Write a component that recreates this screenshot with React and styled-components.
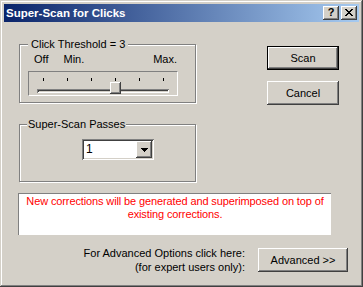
import styled, { createGlobalStyle } from 'styled-components';

const GlobalStyle = createGlobalStyle`
  html, body {
    margin: 0;
    padding: 0;
    background: #d4d0c8;
  }
  body {
    font-family: "Liberation Sans", Arial, sans-serif;
    font-size: 11px;
    color: #000;
  }
`;

const FACE = '#d4d0c8';
const raised = 'inset -1px -1px #404040, inset 1px 1px #fff, inset -2px -2px #808080';

const TICKS = [0, 1, 2, 3, 4, 5];

const App = () => {
    const threshold = 3;

    return (
        <>
            <GlobalStyle />
            <Window>
                <TitleBar>
                    <TitleText>Super-Scan for Clicks</TitleText>
                    <CaptionButtons>
                        <CaptionButton>?</CaptionButton>
                        <CaptionButton>
                            <svg width="8" height="7" viewBox="0 0 8 7" shapeRendering="crispEdges">
                                <path d="M0 0h2v1H0zM1 1h2v1H1zM2 2h2v1H2zM3 3h2v1H3zM2 4h2v1H2zM1 5h2v1H1zM0 6h2v1H0zM6 0h2v1H6zM5 1h2v1H5zM4 2h2v1H4zM4 4h2v1H4zM5 5h2v1H5zM6 6h2v1H6z" fill="#000" />
                            </svg>
                        </CaptionButton>
                    </CaptionButtons>
                </TitleBar>

                <Body>
                    <MainRow>
                        <LeftCol>
                            <Group>
                                <GroupFrame $height={59}>
                                    <Legend $left={8} $pad={3}>Click Threshold = 3</Legend>
                                    <ScaleLabels>
                                        <span>Off</span>
                                        <span>Min.</span>
                                        <MaxLabel>Max.</MaxLabel>
                                    </ScaleLabels>
                                    <SliderFrame>
                                        <Ticks>
                                            {TICKS.map(t => <Tick key={t} />)}
                                        </Ticks>
                                        <Channel />
                                        <Thumb style={{left: 14 + threshold * 24 - 5}} />
                                    </SliderFrame>
                                </GroupFrame>
                            </Group>

                            <Group $gap={15}>
                                <GroupFrame $height={58}>
                                    <Legend $left={7} $pad={1}>Super-Scan Passes</Legend>
                                    <Combo>
                                        <ComboText>1</ComboText>
                                        <DropButton>
                                            <svg width="7" height="4" viewBox="0 0 7 4" shapeRendering="crispEdges">
                                                <path d="M0 0h7v1H0zM1 1h5v1H1zM2 2h3v1H2zM3 3h1v1H3z" fill="#000" />
                                            </svg>
                                        </DropButton>
                                    </Combo>
                                </GroupFrame>
                            </Group>
                        </LeftCol>

                        <RightCol>
                            <PushButton $default $w={72}>Scan</PushButton>
                            <PushButton $w={72}>Cancel</PushButton>
                        </RightCol>
                    </MainRow>

                    <InfoBox>
                        New corrections will be generated and superimposed on top of existing corrections.
                    </InfoBox>

                    <Footer>
                        <FooterText>
                            For Advanced Options click here:<br />
                            (for expert users only):
                        </FooterText>
                        <PushButton $w={90}>Advanced &gt;&gt;</PushButton>
                    </Footer>
                </Body>
            </Window>
        </>
    )
}

const Window = styled.div`
    width: 363px;
    height: 287px;
    box-sizing: border-box;
    padding: 4px;
    background: ${FACE};
    box-shadow: inset -1px -1px #404040, inset 1px 1px ${FACE}, inset -2px -2px #808080, inset 2px 2px #fff;
    display: flex;
    flex-direction: column;
`

const TitleBar = styled.div`
    height: 18px;
    display: flex;
    align-items: center;
    padding: 0 2px;
    background: linear-gradient(to right, #0a246a, #a6caf0);
`

const TitleText = styled.div`
    flex: 1;
    color: #fff;
    font-weight: bold;
    font-size: 11.5px;
    white-space: nowrap;
`

const CaptionButtons = styled.div`
    display: flex;
    gap: 2px;
`

const CaptionButton = styled.div`
    width: 16px;
    height: 14px;
    box-sizing: border-box;
    background: ${FACE};
    box-shadow: ${raised};
    display: flex;
    align-items: center;
    justify-content: center;
    padding-bottom: 1px;
    font-weight: bold;
    font-size: 11px;
    line-height: 1;
`

const Body = styled.div`
    flex: 1;
    display: flex;
    flex-direction: column;
    padding: 16px 0 0 14px;
`

const MainRow = styled.div`
    display: flex;
    align-items: flex-start;
`

const LeftCol = styled.div`
    display: flex;
    flex-direction: column;
    margin-left: 1px;
`

const Group = styled.div`
    padding-top: 6px;
    margin-top: ${p => p.$gap || 0}px;
`

const GroupFrame = styled.div`
    position: relative;
    width: 177px;
    height: ${p => p.$height}px;
    box-sizing: border-box;
    border: 1px solid #808080;
    box-shadow: inset 1px 1px #fff, 1px 1px #fff;
    display: flex;
    flex-direction: column;
    align-items: flex-start;
`

const Legend = styled.span`
    position: absolute;
    top: -7px;
    left: ${p => p.$left}px;
    padding: 0 ${p => p.$pad}px;
    line-height: 13px;
    background: ${FACE};
    white-space: nowrap;
`

const ScaleLabels = styled.div`
    align-self: stretch;
    display: flex;
    gap: 15px;
    padding: 8px 18px 0 14px;
    line-height: 13px;
`

const MaxLabel = styled.span`
    margin-left: auto;
`

const SliderFrame = styled.div`
    position: relative;
    width: 150px;
    height: 25px;
    box-sizing: border-box;
    margin: 5px 0 0 8px;
    border-top: 1px solid #808080;
    border-left: 1px solid #808080;
    border-bottom: 1px solid #fff;
    border-right: 1px solid #fff;
`

const Ticks = styled.div`
    display: flex;
    gap: 23px;
    padding: 6px 0 0 14px;
`

const Tick = styled.div`
    width: 1px;
    height: 3px;
    background: #000;
`

const Channel = styled.div`
    width: 132px;
    height: 4px;
    margin: 8px 0 0 8px;
    background: ${FACE};
    box-shadow: inset 1px 1px #808080, inset -1px -1px #fff, inset 2px 2px #404040;
`

const Thumb = styled.div`
    position: absolute;
    top: 10px;
    width: 11px;
    height: 12px;
    background: ${FACE};
    box-shadow: ${raised};
`

const Combo = styled.div`
    width: 72px;
    height: 21px;
    box-sizing: border-box;
    margin: 14px 0 0 62px;
    padding: 2px;
    display: flex;
    background: #fff;
    box-shadow: inset 1px 1px #808080, inset -1px -1px #fff, inset 2px 2px #404040, inset -2px -2px ${FACE};
`

const ComboText = styled.div`
    flex: 1;
    padding-left: 2px;
    font-size: 12px;
    line-height: 17px;
`

const DropButton = styled.div`
    width: 16px;
    height: 17px;
    box-sizing: border-box;
    background: ${FACE};
    box-shadow: ${raised};
    display: flex;
    align-items: center;
    justify-content: center;
`

const RightCol = styled.div`
    display: flex;
    flex-direction: column;
    gap: 11px;
    padding-top: 8px;
    margin-left: 71px;
`

const PushButton = styled.button`
    width: ${p => p.$w}px;
    height: 24px;
    padding: 0;
    border: none;
    background: ${FACE};
    font-family: "Liberation Sans", Arial, sans-serif;
    font-size: 11px;
    color: #000;
    box-shadow: ${p => p.$default
        ? 'inset 0 0 0 1px #000, inset -2px -2px #404040, inset 2px 2px #fff, inset -3px -3px #808080'
        : raised};
`

const InfoBox = styled.div`
    width: 313px;
    height: 42px;
    box-sizing: border-box;
    margin-top: 11px;
    padding: 1px 0 0;
    background: #fff;
    border-top: 1px solid #808080;
    border-left: 1px solid #808080;
    color: #ff0000;
    text-align: center;
    line-height: 13px;
    letter-spacing: -0.12px;
`

const Footer = styled.div`
    display: flex;
    justify-content: flex-end;
    align-items: center;
    gap: 13px;
    margin-top: 11px;
    padding-right: 11px;
`

const FooterText = styled.div`
    text-align: right;
    line-height: 14px;
`

export default App
